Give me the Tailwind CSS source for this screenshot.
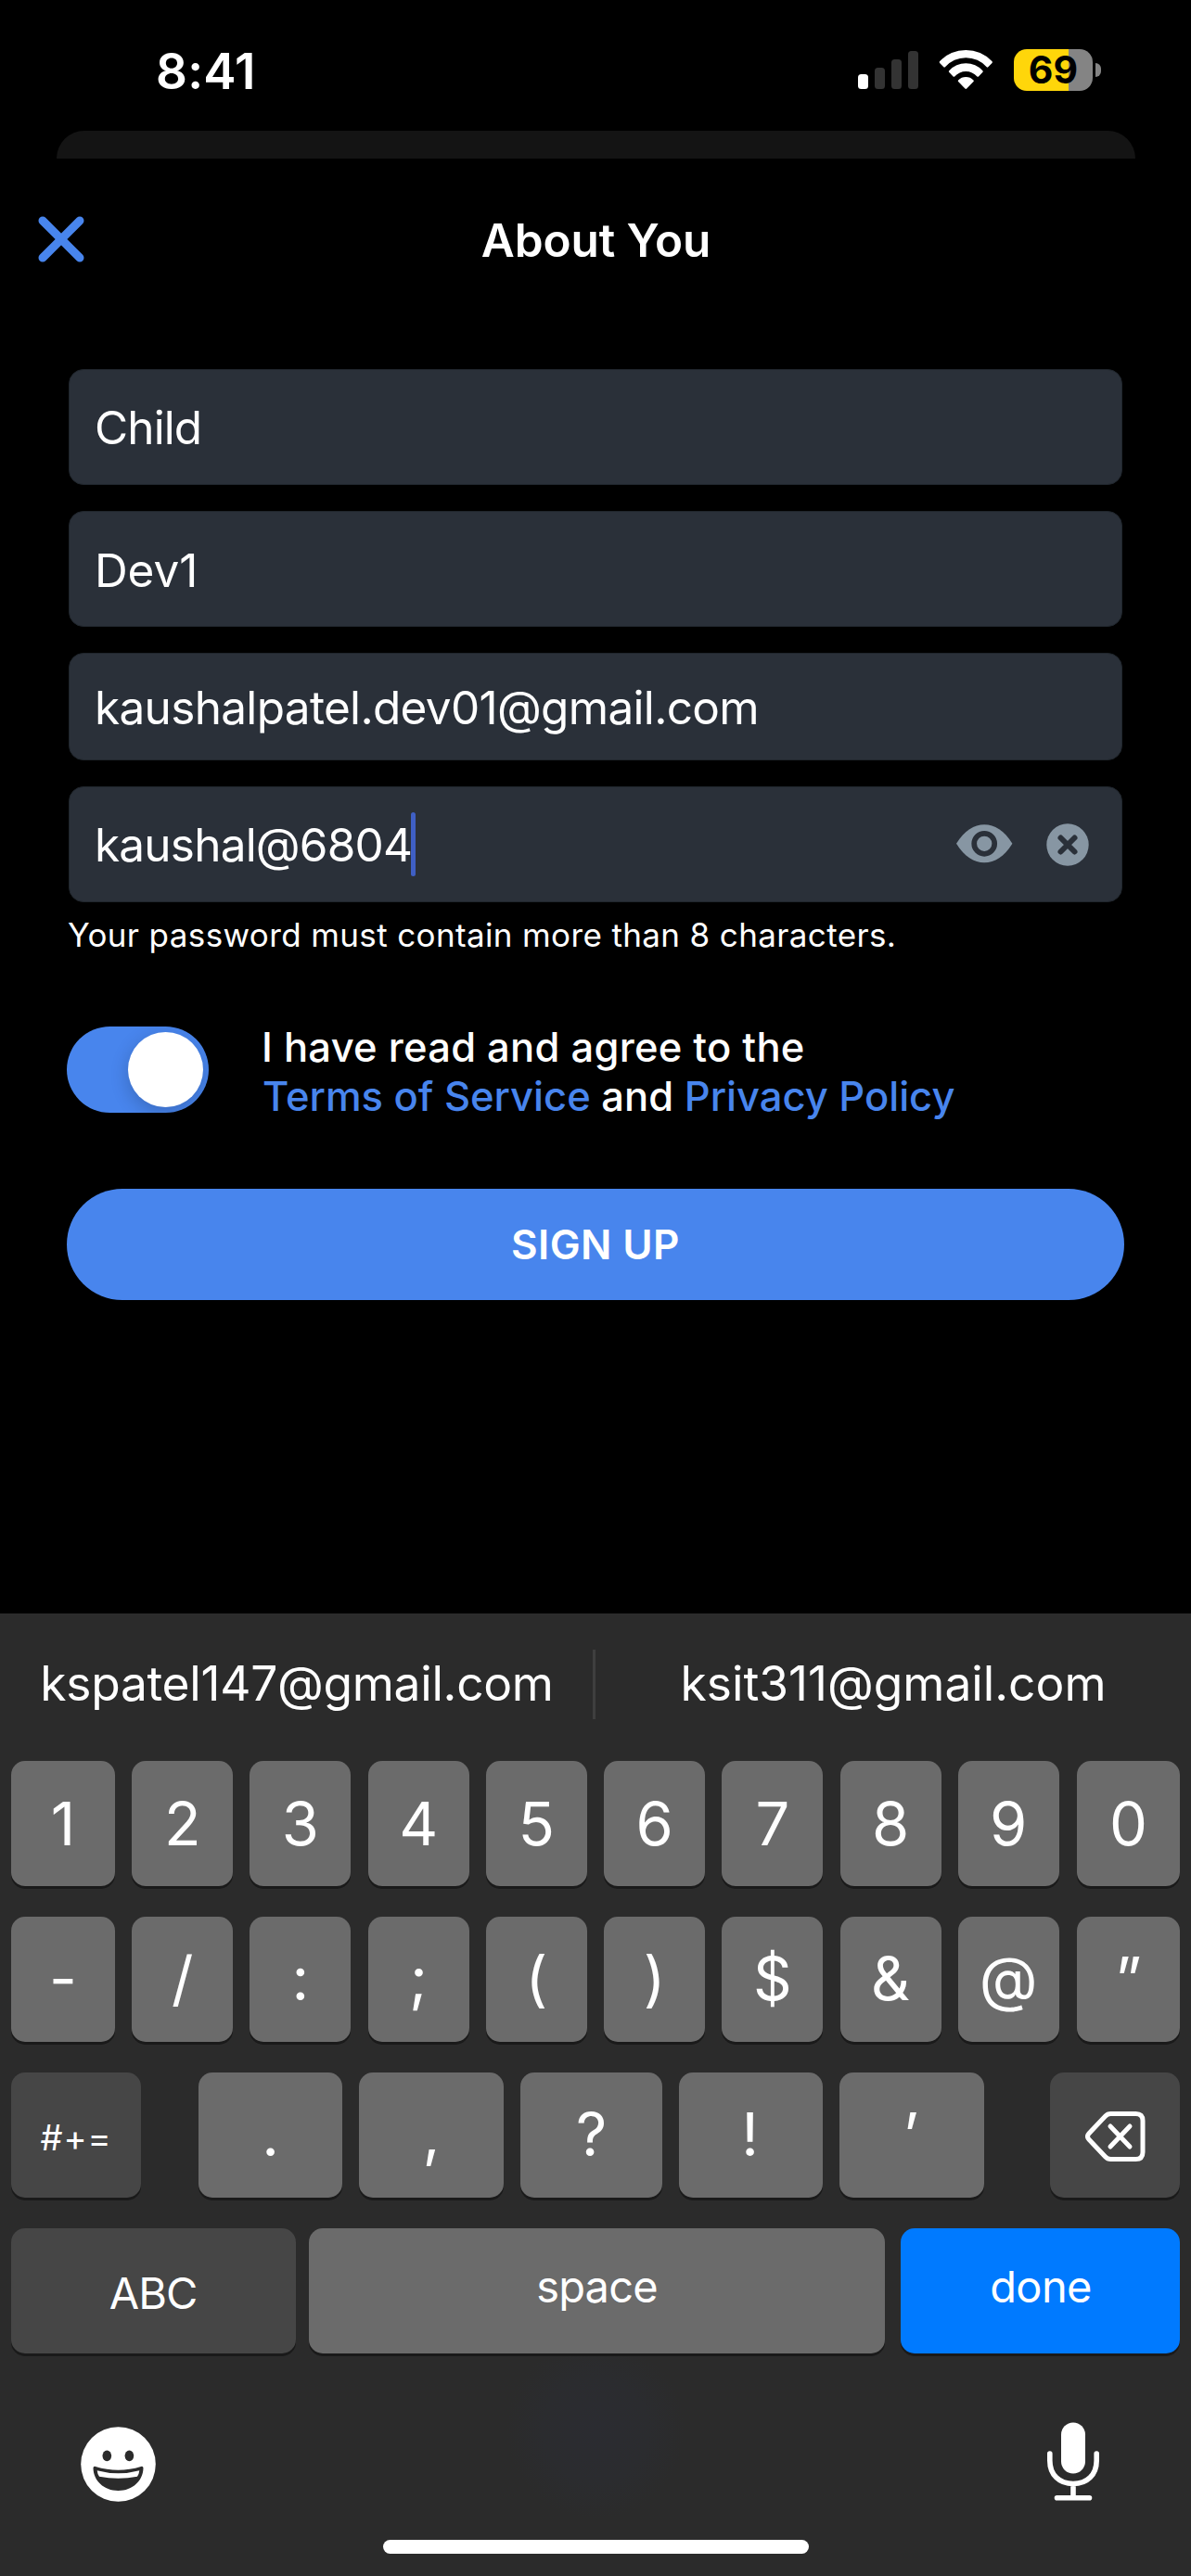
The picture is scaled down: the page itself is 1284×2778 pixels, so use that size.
<!DOCTYPE html>
<html lang="en">
<head>
<meta charset="utf-8">
<title>About You</title>
<script src="https://cdn.jsdelivr.net/npm/@tailwindcss/browser@4"></script>
</head>
<body class="bg-black">
<div class="flex h-[2778px] w-[1284px] flex-col overflow-hidden bg-black font-['Inter',sans-serif] text-white">

  <!-- Status bar -->
  <header class="flex h-[141px] shrink-0 items-center pt-[12px] pr-[97px] pl-[168px]">
    <span class="pt-[2px] text-[53px] leading-none font-semibold tracking-[0.2px]">8:41</span>
    <div class="-mt-[2px] ml-auto flex items-center">
      <svg class="h-[45px] w-[65px]" viewBox="0 0 65 45">
        <rect x="0" y="27" width="11" height="16" rx="3.5" fill="#fff"/>
        <rect x="18" y="20" width="11" height="23" rx="3.5" fill="#333"/>
        <rect x="36" y="11" width="11" height="32" rx="3.5" fill="#333"/>
        <rect x="54" y="2" width="11" height="41" rx="3.5" fill="#333"/>
      </svg>
      <svg class="ml-[22px] h-[45px] w-[59px]" viewBox="0 -1 59 45" fill="#fff">
        <path d="M1.2 12.1A38.5 38.5 0 0 1 57.4 12.1Q58.3 13 57.5 13.9L53.3 18.3Q52.5 19 51.7 18.3A29.8 29.8 0 0 0 6.9 18.3Q6.1 19 5.3 18.3L1.1 13.9Q.3 13 1.2 12.1Z"/>
        <path d="M11.2 22.2A24.4 24.4 0 0 1 47.4 22.2Q48.2 23 47.5 23.8L43 28.4Q42.2 29 41.4 28.4A16.5 16.5 0 0 0 17.2 28.4Q16.4 29 15.6 28.4L11.1 23.8Q10.4 23 11.2 22.2Z"/>
        <path d="M21.1 32.5A11.6 11.6 0 0 1 37.5 32.5Q38.3 33.2 37.5 34L30.2 41.6Q29.3 42.5 28.4 41.6L21.1 34Q20.3 33.2 21.1 32.5Z"/>
      </svg>
      <div class="ml-[22px] flex h-[45px] w-[85px] items-center justify-center rounded-[14px] bg-[linear-gradient(to_right,#ffd60a_59px,#848484_59px)]">
        <span class="text-[41px] leading-none font-bold text-black">69</span>
      </div>
      <div class="ml-[3px] h-[15px] w-[6px] rounded-r-full bg-[#848484]"></div>
    </div>
  </header>

  <!-- Top edge of the card behind the sheet -->
  <div class="mr-[60px] ml-[61px] h-[30px] shrink-0 rounded-t-[30px] bg-[#141414]"></div>

  <nav class="grid h-[175px] shrink-0 grid-cols-[1fr_auto_1fr] items-center">
    <button class="mb-[2px] ml-[41px] w-[50px]" aria-label="Close">
      <svg class="size-[50px]" viewBox="0 0 50 50" fill="none" stroke="#4885ed" stroke-width="9" stroke-linecap="round"><path d="M5 5L45 45M45 5L5 45"/></svg>
    </button>
    <h1 class="pl-[1px] text-[49.5px] leading-[60px] font-semibold tracking-[-0.1px]">About You</h1>
  </nav>

  <form class="flex flex-col px-[72px] pt-[52px]">
    <div class="mx-[2px] flex flex-col gap-[28px] text-[49.5px] leading-[60px]">
      <div class="flex h-[125px] items-center rounded-[16px] border border-[#20262d] bg-[#2a3039] pt-[1px] pl-[27px]"><span class="tracking-[-0.9px]">Child</span></div>
      <div class="flex h-[125px] items-center rounded-[16px] border border-[#20262d] bg-[#2a3039] pt-[2px] pl-[27px]"><span class="tracking-[-0.1px]">Dev1</span></div>
      <div class="flex h-[116px] items-center rounded-[16px] border border-[#20262d] bg-[#2a3039] pt-[2px] pl-[27px]"><span class="tracking-[-0.68px]">kaushalpatel.dev01@gmail.com</span></div>
      <div class="flex h-[125px] items-center rounded-[16px] border border-[#20262d] bg-[#2a3039] pr-[35px] pl-[27px]">
        <span class="tracking-[-0.8px]">kaushal@6804</span>
        <i class="-ml-[1px] h-[69px] w-[5px] rounded-full bg-[#3f5fc4]"></i>
        <svg class="mb-[1px] ml-auto h-[44px] w-[61px]" viewBox="0 0 61 44">
          <path fill="#8796a3" d="M0 21.8C9 7.5 19 1.2 30.2 1.2S51.5 7.5 60.4 21.8C51.5 36 41.5 42.3 30.2 42.3S9 36 0 21.8Z"/>
          <circle cx="30.2" cy="21.8" r="11" fill="none" stroke="#2a3039" stroke-width="5.7"/>
        </svg>
        <svg class="ml-[36px] size-[46px]" viewBox="0 0 46 46">
          <circle cx="23" cy="23" r="22.7" fill="#8796a3"/>
          <path d="M15.5 15.5L30.5 30.5M30.5 15.5L15.5 30.5" stroke="#2a3039" stroke-width="6" stroke-linecap="round"/>
        </svg>
      </div>
    </div>
    <p class="mt-[13px] pl-[1px] text-[35px] leading-[45px] tracking-[0.37px]">Your password must contain more than 8 characters.</p>

    <div class="mt-[72px] flex items-start">
      <div class="mt-[4px] flex h-[93px] w-[153px] shrink-0 items-center justify-end overflow-hidden rounded-full bg-[#4885ed] pr-[6px]">
        <div class="size-[81px] rounded-full bg-white shadow-[0_6px_20px_rgba(0,0,0,0.2)]"></div>
      </div>
      <p class="ml-[57px] text-[43.5px] leading-[53px] font-medium whitespace-nowrap"><span class="tracking-[0.25px]">I have read and agree to the</span><br><span class="pl-[1px]"><span class="text-[#4885ed]">Terms of Service</span> and <span class="text-[#4885ed]">Privacy Policy</span></span></p>
    </div>

    <button class="mt-[73px] flex h-[120px] items-center justify-center rounded-full bg-[#4885ed] text-[44px] leading-none font-semibold tracking-[0.4px]">SIGN UP</button>
  </form>

  <!-- Keyboard -->
  <section class="relative mt-auto flex h-[1038px] shrink-0 flex-col bg-[#2b2b2b]">
    <div class="pointer-events-none absolute top-[784px] left-[546px] size-[192px] rounded-full bg-[radial-gradient(closest-side,#2b2c31_0%,#2b2c2f_60%,#2b2b2b_100%)]"></div>

    <div class="flex h-[153px] items-center text-[51.5px] leading-none">
      <span class="w-[639px] pb-[1px] pl-[1px] text-center tracking-[-0.29px]">kspatel147@gmail.com</span>
      <i class="h-[75px] w-[3px] bg-[#3f3f3f]"></i>
      <span class="flex-1 pb-[1px] text-center">ksit311@gmail.com</span>
    </div>

    <div class="relative mt-[6px] flex flex-col gap-[33px] px-[12px] text-[65px] leading-none">
      <div id="row-digits" class="flex h-[135px] justify-between"></div>
      <div id="row-symbols" class="flex h-[135px] justify-between"></div>
      <div class="flex h-[135px]">
        <div class="flex w-[140px] items-center justify-center rounded-[15px] bg-[#464646] pt-[4px] text-[38px] tracking-[0.9px] shadow-[0_3px_0_#1a1a1a]">#+=</div>
        <div class="ml-[62px] flex w-[155px] items-center justify-center rounded-[15px] bg-[#6b6b6b] pb-[2px] shadow-[0_3px_0_#1a1a1a]">.</div>
        <div class="ml-[18px] flex w-[156px] items-center justify-center rounded-[15px] bg-[#6b6b6b] pb-[2px] shadow-[0_3px_0_#1a1a1a]">,</div>
        <div class="ml-[18px] flex w-[153px] items-center justify-center rounded-[15px] bg-[#6b6b6b] pb-[2px] shadow-[0_3px_0_#1a1a1a]">?</div>
        <div class="ml-[18px] flex w-[155px] items-center justify-center rounded-[15px] bg-[#6b6b6b] pr-[2px] pb-[2px] shadow-[0_3px_0_#1a1a1a]">!</div>
        <div class="ml-[18px] flex w-[156px] items-center justify-center rounded-[15px] bg-[#6b6b6b] pr-[2px] pb-[2px] shadow-[0_3px_0_#1a1a1a]">’</div>
        <div class="ml-[71px] flex w-[140px] items-center justify-center rounded-[15px] bg-[#464646] pt-[2px] shadow-[0_3px_0_#1a1a1a]">
          <svg class="h-[54px] w-[65px]" viewBox="0 0 65 54" fill="none" stroke="#fff" stroke-width="5" stroke-linecap="round" stroke-linejoin="round">
            <path d="M27.5 2.5H54.5Q62 2.5 62 10V44Q62 51.5 54.5 51.5H27.5Q24 51.5 21.5 48.8L4 30.3Q1 27 4 23.7L21.5 5.2Q24 2.5 27.5 2.5Z"/>
            <path d="M27 16L48 38M48 16L27 38"/>
          </svg>
        </div>
      </div>
      <div class="flex h-[135px] text-[47px]">
        <div class="flex w-[307px] items-center justify-center rounded-[15px] bg-[#464646] pt-[3px] pr-[1px] tracking-[-1px] shadow-[0_3px_0_#1a1a1a]">ABC</div>
        <div class="ml-[14px] flex w-[621px] items-center justify-center rounded-[15px] bg-[#6b6b6b] pb-[11px] tracking-[-0.8px] shadow-[0_3px_0_#1a1a1a]">space</div>
        <div class="ml-[17px] flex w-[301px] items-center justify-center rounded-[15px] bg-[#007aff] pb-[11px] pl-[1px] tracking-[-0.6px] shadow-[0_3px_0_#1a1a1a]">done</div>
      </div>
    </div>

    <div class="relative flex h-[201px] items-start justify-between pr-[98px] pl-[87px]">
      <svg class="mt-[79px] size-[81px]" viewBox="0 0 81 81">
        <circle cx="40.5" cy="40.5" r="40.3" fill="#fff"/>
        <ellipse cx="28.3" cy="31.3" rx="4.8" ry="5.9" fill="#2b2b2b"/>
        <ellipse cx="52.4" cy="31.3" rx="4.8" ry="5.9" fill="#2b2b2b"/>
        <path fill="#2b2b2b" d="M13.5 44.5Q13.6 42.4 16 43Q40.5 50.5 65 43Q67.4 42.4 67.5 44.5C67.3 58 56 69 40.5 69S13.7 58 13.5 44.5Z"/>
        <path fill="#fff" d="M17.7 47.3Q40.5 53.4 63.3 47.3Q63 51 61 53.7Q40.5 57.7 20 53.7Q18 51 17.7 47.3Z"/>
      </svg>
      <svg class="mt-[74px] h-[86px] w-[58px]" viewBox="0 0 58 86" fill="none" stroke="#fff" stroke-width="5.6" stroke-linecap="round">
        <rect x="16" y="0.5" width="26" height="55" rx="13" fill="#fff" stroke="none"/>
        <path d="M3.8 34V41.5C3.8 57 14 66.5 29 66.5S54.2 57 54.2 41.5V34M29 66.5V81M11.5 81.8H46.5"/>
      </svg>
    </div>
    <div class="mx-auto h-[15px] w-[459px] rounded-full bg-white"></div>
  </section>
</div>
<script>
  const key = (pad) => (label) => `<div class="flex w-[109px] items-center justify-center rounded-[15px] bg-[#6b6b6b] ${pad} shadow-[0_3px_0_#1a1a1a] first:w-[112px] last:ml-[1px] last:w-[111px]">${label}</div>`;
  document.getElementById('row-digits').innerHTML = [...'1234567890'].map(key('pb-0')).join('');
  document.getElementById('row-symbols').innerHTML = ['-', '/', ':', ';', '(', ')', '$', '&amp;', '@', '”'].map(key('pb-[3px]')).join('');
</script>
</body>
</html>
